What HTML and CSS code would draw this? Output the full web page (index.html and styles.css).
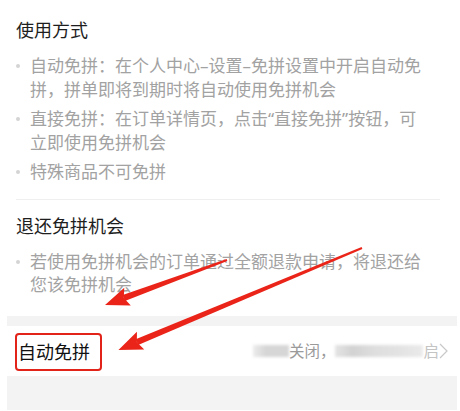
FILE: index.html
```html
<!DOCTYPE html>
<html lang="zh-CN">
<head>
<meta charset="utf-8">
<link rel="stylesheet" href="styles.css">
</head>
<body>
<div class="page">
  <section class="rules">
    <h2 class="title">使用方式</h2>
    <ul class="list">
      <li>自动免拼：在个人中心–设置–免拼设置中开启自动免拼，拼单即将到期时将自动使用免拼机会</li>
      <li>直接免拼：在订单详情页，点击“直接免拼”按钮，可立即使用免拼机会</li>
      <li>特殊商品不可免拼</li>
    </ul>
    <div class="divider"></div>
    <h2 class="title">退还免拼机会</h2>
    <ul class="list">
      <li>若使用免拼机会的订单通过全额退款申请，将退还给您该免拼机会</li>
    </ul>
  </section>
  <div class="settings">
    <div class="row">
      <span class="row-label">自动免拼</span>
      <span class="row-value">
        <span class="blur b1"></span>
        <span class="val-text">关闭，</span>
        <span class="blur b2"></span>
        <span class="val-text faint">启</span>
        <svg class="chev" width="9" height="16" viewBox="0 0 9 16"><path d="M1 1 L8 8 L1 15" fill="none" stroke="#c8c8c8" stroke-width="1.2"/></svg>
      </span>
    </div>
  </div>
  <svg class="annot" width="460" height="411" viewBox="0 0 460 411">
    <g fill="#ea2419">
      <g transform="translate(227 260) rotate(159.75)">
        <polygon points="0,-1 0,1 110,3.2 110,-3.2"/>
        <polygon points="106,-9.5 130,0 106,9.5 110,0"/>
      </g>
      <g transform="translate(362 248) rotate(157.3)">
        <polygon points="0,-1 0,1 244,3.2 244,-3.2"/>
        <polygon points="240,-9.5 264,0 240,9.5 244,0"/>
      </g>
    </g>
  </svg>
</div>
</body>
</html>
```

FILE: styles.css
```css
* { box-sizing: border-box; }
html, body {
  margin: 0;
  padding: 0;
  background: #fff;
}
body {
  font-family: "Noto Sans", "Noto Sans CJK SC", sans-serif;
  width: 460px;
  height: 411px;
  overflow: hidden;
}
.page {
  position: relative;
  width: 460px;
  height: 411px;
}
.rules {
  padding: 18px 32px 19px 16px;
}
.title {
  margin: 0;
  font-size: 18px;
  line-height: 24px;
  font-weight: normal;
  color: #1e1e1e;
}
.list {
  list-style: none;
  margin: 12px 0 0;
  padding: 0;
}
.list li {
  position: relative;
  padding-left: 14px;
  font-size: 17px;
  line-height: 23.5px;
  color: #a2a2a2;
  margin-bottom: 6px;
}
.list li:last-child { margin-bottom: 0; }
.list li::before {
  content: "";
  position: absolute;
  left: 0;
  top: 10px;
  width: 4px;
  height: 4px;
  border-radius: 50%;
  background: #d4d4d4;
}
.divider {
  height: 1px;
  background: #efefef;
  margin: 15px -12px 14px 0;
}
.settings {
  margin: 0 3px 0 7px;
  background: #f3f3f3;
  padding: 10px 0 34px;
}
.row {
  height: 50px;
  background: #fff;
  display: flex;
  align-items: center;
  justify-content: space-between;
  padding: 0 9px 0 8px;
}
.row-label {
  font-size: 18px;
  line-height: 34px;
  color: #111;
  border: 2px solid #e2231a;
  border-radius: 4px;
  padding: 0 10px 0 1px;
  margin-top: 2px;
}
.row-value {
  display: flex;
  align-items: center;
  font-size: 15.5px;
  color: #9a9a9a;
}
.blur {
  display: inline-block;
  height: 12px;
  filter: blur(1.5px);
}
.b1 {
  width: 36px;
  background: linear-gradient(90deg, #ececec 0%, #d6d6d6 35%, #d6d6d6 100%);
}
.b2 {
  width: 88px;
  background: linear-gradient(90deg, #e4e4e4 0%, #d2d2d2 20%, #dedede 45%, #e2e2e2 70%, #eaeaea 100%);
}
.val-text { line-height: 20px; }
.faint { color: #c4c4c4; }
.annot {
  position: absolute;
  left: 0;
  top: 0;
  pointer-events: none;
}
```
